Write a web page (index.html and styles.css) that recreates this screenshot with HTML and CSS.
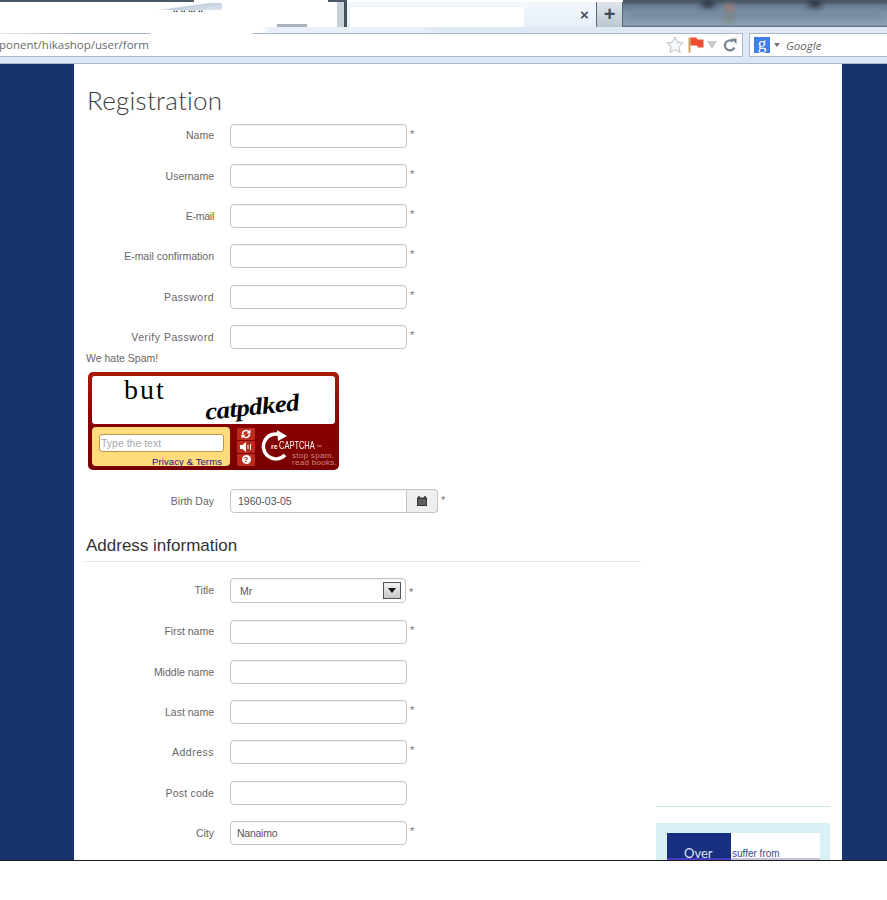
FILE: index.html
```html
<!DOCTYPE html>
<html lang="en">
<head>
<meta charset="utf-8">
<title>Registration</title>
<link rel="stylesheet" href="styles.css">
</head>
<body>
<header class="chrome">
  <div class="tabs">
    <div class="tabs-left">
      <span class="top-dark a"></span>
      <span class="top-dark b"></span>
      <span class="ghost-strip"></span>
      <span class="ghost-text">.. .. ... ..</span>
      <span class="ghost-bar"></span>
      <span class="tab-edge"></span>
    </div>
    <div class="tab">
      <span class="tab-white"></span>
      <span class="tab-close">×</span>
    </div>
    <div class="newtab">+</div>
    <div class="blurred">
      <span class="blur-dark one"></span>
      <span class="blur-dark two"></span>
      <span class="blur-color"></span>
      <span class="blur-light"></span>
    </div>
  </div>
  <div class="under-tabs"></div>
  <div class="toolbar">
    <div class="urlbar">
      <span class="url-text">ponent/hikashop/user/form</span>
      <span class="url-gap"></span>
      <svg class="ico-star" viewBox="0 0 18 18" width="18" height="18"><path d="M9 1l2.4 5.3 5.8.6-4.3 3.9 1.2 5.7L9 13.6l-5.1 2.9 1.2-5.7L.8 6.9l5.8-.6z" fill="#f6f7f8" stroke="#b9bfc4"/></svg>
      <svg class="ico-flag" viewBox="0 0 16 16" width="16" height="16"><path d="M1.500 0.500v15" stroke="#c9a05c" stroke-width="2"/><path d="M2.500 0.500h6l1 2h6v8h-5.500l-1-2h-6.500z" fill="#ee4d33"/></svg>
      <svg class="ico-drop" viewBox="0 0 10 8" width="10" height="8"><path d="M0 0h10L5 8z" fill="#c6cbd0"/></svg>
      <svg class="ico-reload" viewBox="0 0 14 14" width="14" height="14"><path d="M11.500 9.500A5 5 0 1 1 10 3.500" fill="none" stroke="#76838e" stroke-width="2.200"/><path d="M8 0.500h5.500V6z" fill="#76838e"/></svg>
    </div>
    <div class="searchbar">
      <span class="g-box">g</span>
      <svg class="ico-caret" viewBox="0 0 6 4" width="6" height="4"><path d="M0 0h6L3 4z" fill="#6d7378"/></svg>
      <span class="search-text">Google</span>
    </div>
  </div>
  <div class="strip"></div>
</header>

<div class="page">
  <div class="sheet">
    <main class="main">
      <h1 class="title">Registration</h1>
      <form class="form">
        <div class="row"><label class="label up">Name</label><span class="input"></span><span class="star">*</span></div>
        <div class="row"><label class="label">Username</label><span class="input"></span><span class="star">*</span></div>
        <div class="row"><label class="label narrow">E-mail</label><span class="input"></span><span class="star">*</span></div>
        <div class="row"><label class="label">E-mail confirmation</label><span class="input"></span><span class="star">*</span></div>
        <div class="row"><label class="label wide down">Password</label><span class="input"></span><span class="star">*</span></div>
        <div class="row tight"><label class="label wide down">Verify Password</label><span class="input"></span><span class="star">*</span></div>

        <p class="spam">We hate Spam!</p>
        <div class="captcha">
          <div class="cap-image">
            <span class="word-a">but</span>
            <span class="word-b">catpdked</span>
          </div>
          <div class="cap-bottom">
            <div class="cap-panel">
              <span class="cap-input">Type the text</span>
              <span class="cap-link">Privacy &amp; Terms</span>
            </div>
            <div class="cap-buttons">
              <span class="cap-btn"><svg viewBox="0 0 10 10" width="10" height="10"><path d="M8.500 5A3.500 3.500 0 0 1 2 6.800M1.500 5A3.500 3.500 0 0 1 8 3.200" fill="none" stroke="#fff" stroke-width="1.500"/><path d="M9.500 0.500v4h-4zM.5 9.500v-4h4z" fill="#fff"/></svg></span>
              <span class="cap-btn"><svg viewBox="0 0 12 10" width="12" height="10"><path d="M0 3h2.500L6 0v10L2.500 7H0z" fill="#fff"/><path d="M8 3v4M10.500 2v6" stroke="#fff"/></svg></span>
              <span class="cap-btn"><span class="cap-help">?</span></span>
            </div>
            <div class="cap-logo">
              <svg class="cap-arc" viewBox="0 0 30 32" width="30" height="32"><path d="M24 25A12.500 12.500 0 1 1 20 5" fill="none" stroke="#fff" stroke-width="3.500"/><path d="M16 0l10 6-9 5z" fill="#fff"/></svg>
              <div class="cap-brand"><span class="cap-re">re</span><span class="cap-name">CAPTCHA</span><span class="cap-tm">™</span></div>
              <div class="cap-tag">stop spam.<br>read books.</div>
            </div>
          </div>
        </div>

        <div class="row birth">
          <label class="label down">Birth Day</label>
          <div class="date-group">
            <span class="input date">1960-03-05</span>
            <span class="addon"><svg viewBox="0 0 10 10" width="10" height="10"><path d="M0 1.500h10V10H0z" fill="#333"/><path d="M2 0v2M8 0v2" stroke="#333" stroke-width="1.500"/><path d="M1 4h8M1 6h8M1 8h8" stroke="#ddd" stroke-width=".5"/></svg></span>
          </div>
          <span class="star">*</span>
        </div>

        <h2 class="section">Address information</h2>

        <div class="row title-row">
          <label class="label down">Title</label>
          <span class="input select">Mr<span class="select-btn"><svg viewBox="0 0 8 5" width="8" height="5"><path d="M0 0h8L4 5z" fill="#111"/></svg></span></span>
          <span class="star">*</span>
        </div>
        <div class="row"><label class="label">First name</label><span class="input"></span><span class="star">*</span></div>
        <div class="row"><label class="label">Middle name</label><span class="input"></span></div>
        <div class="row"><label class="label">Last name</label><span class="input"></span><span class="star">*</span></div>
        <div class="row"><label class="label wide">Address</label><span class="input"></span><span class="star">*</span></div>
        <div class="row"><label class="label semi down">Post code</label><span class="input"></span></div>
        <div class="row"><label class="label down">City</label><span class="input narrow">Nanaimo</span><span class="star">*</span></div>
      </form>
    </main>
    <aside class="side">
      <div class="side-rule"></div>
      <div class="promo">
        <div class="promo-inner">
          <div class="promo-navy">Over</div>
          <div class="promo-text">suffer from</div>
        </div>
      </div>
    </aside>
  </div>
</div>
<div class="bottom"></div>
</body>
</html>
```
FILE: styles.css
```css
* { box-sizing: border-box; }
html, body { margin: 0; padding: 0; height: 900px; overflow: hidden; background: #fff; }
body { font-family: "Liberation Sans", Arial, sans-serif; color: #555; }

/* browser chrome */
.chrome { height: 64px; display: flex; flex-direction: column; overflow: hidden; }
.tabs { height: 27px; display: flex; flex: none; }
.tabs-left { position: relative; width: 347px; background: #fff; flex: none; }
.top-dark { position: absolute; top: 0; height: 2px; background: #4a5868; }
.top-dark.a { left: 0; width: 194px; }
.top-dark.b { left: 328px; width: 19px; }
.ghost-strip { position: absolute; left: 120px; top: 3px; width: 102px; height: 7px; background: linear-gradient(172deg, #fff 55%, #c4d0de 62%, #dfe6ee 100%); }
.ghost-text { position: absolute; left: 173px; top: 5px; font-size: 9px; font-weight: bold; color: #222; line-height: 9px; }
.ghost-bar { position: absolute; left: 277px; top: 24px; width: 30px; height: 3px; background: #a9b3bd; }
.tab-edge { position: absolute; left: 337px; top: 2px; width: 10px; height: 25px; background: linear-gradient(90deg, #c9d1da 70%, #46505c 70%); }
.tab { position: relative; width: 249px; flex: none; background: linear-gradient(#f3f7fc, #e6eff9); border-top: 2px solid #fff; }
.tab-white { position: absolute; left: 3px; top: 5px; width: 174px; height: 20px; background: #fff; }
.tab-close { position: absolute; left: 233px; top: 4px; font-size: 15px; line-height: 18px; font-weight: bold; color: #4a525a; }
.newtab { width: 27px; flex: none; margin-top: 2px; background: linear-gradient(#dfe5ec, #bcc7d2); border-left: 1px solid #5a6774; border-right: 1px solid #5a6774; font-size: 20px; line-height: 24px; text-align: center; color: #3e4b58; font-weight: bold; }
.blurred { position: relative; flex: 1; overflow: hidden; background: linear-gradient(#4a5868 0, #4a5868 2px, #66798f 5px, #7d91a8 12px, #8a9eb5 25px, #566779 27px); }
.blur-dark { position: absolute; top: 0; width: 12px; height: 8px; background: #2a323a; filter: blur(3px); }
.blur-dark.one { left: 79px; }
.blur-dark.two { left: 186px; }
.blur-color { position: absolute; left: 102px; top: 4px; width: 9px; height: 18px; background: linear-gradient(#a8706e, #78957c); filter: blur(2.500px); }
.blur-light { position: absolute; left: 8px; top: 12px; width: 250px; height: 5px; background: #71859c; filter: blur(3px); }

.under-tabs { height: 6px; flex: none; background: linear-gradient(90deg, #fff 0, #fff 262px, #e9f0f9 270px, #e9f0f9 420px, #dfe9f5 440px); }

.toolbar { height: 24px; flex: none; display: flex; background: #dfe9f5; }
.urlbar {
  width: 743px; flex: none; display: flex; align-items: center; overflow: hidden; padding-right: 5px;
  background-color: #fff;
  background-image: linear-gradient(90deg, #e4e9ef 0, #a9b8c8 80px, #a9b8c8 150px, #fff 151px, #fff 252px, #a9b8c8 253px);
  background-size: 100% 1px; background-repeat: no-repeat; background-position: top;
  border-bottom: 1px solid #a9b8c8; border-right: 1px solid #a9b8c8;
}
.url-text { font-family: "Open Sans", sans-serif; font-size: 11.500px; color: #6a6a6a; margin-left: -1px; white-space: nowrap; }
.url-gap { flex: 1; }
.ico-star { margin-right: 4px; }
.ico-flag { margin-right: 3px; }
.ico-drop { margin-right: 6px; }
.searchbar { margin-left: 6px; flex: 1; display: flex; align-items: center; background: #fff; border-top: 1px solid #a9b8c8; border-bottom: 1px solid #a9b8c8; border-left: 1px solid #a9b8c8; padding-left: 4px; }
.g-box { width: 16px; height: 16px; background: #3f7fe8; color: #fff; font-family: "Liberation Serif", serif; font-size: 17px; line-height: 13px; text-align: center; }
.ico-caret { margin-left: 4px; }
.search-text { margin-left: 6px; font-family: "Open Sans", sans-serif; font-style: italic; font-size: 11.500px; color: #666; }
.strip { height: 7px; flex: none; background: #dbe7f6; border-bottom: 1px solid #a9b8c8; }

/* page */
.page {
  height: 796px; overflow: hidden; padding-left: 74px; padding-right: 45px;
  background-color: #17346f;
  background-image:
    radial-gradient(circle, #1f3e7b 1px, transparent 1.400px),
    radial-gradient(circle, #1c3a76 1px, transparent 1.400px);
  background-size: 16px 16px;
  background-position: 0 0, 8px 8px;
}
.sheet { height: 796px; background: #fff; display: flex; }
.main { width: 582px; flex: none; padding-left: 12px; }
.title { margin: 0 0 0 1px; height: 60px; padding-top: 21px; font-family: Lato, sans-serif; font-weight: 300; font-size: 26px; line-height: 30px; color: #3c3c3c; letter-spacing: .25px; }
.form { margin: 0; padding: 0; }

.row { display: flex; align-items: flex-start; height: 24px; margin-bottom: 16.150px; }
.row.tight { margin-bottom: 2.250px; }
.label { width: 128px; margin-right: 16px; padding-top: .5px; flex: none; text-align: right; font-size: 10.500px; line-height: 22px; color: #666; }
.label.up { padding-top: 0; }
.label.down { padding-top: 1.500px; }
.wide { letter-spacing: .5px; }
.semi { letter-spacing: .2px; }
.narrow { letter-spacing: -.25px; }
.input { display: block; width: 177px; height: 24px; flex: none; background: #fff; border: 1px solid #c4c4c4; border-radius: 4px; box-shadow: inset 0 1px 1px rgba(0,0,0,.05); padding-left: 6px; font-size: 10.500px; line-height: 23px; color: #555; }
.star { margin-left: 3px; font-size: 11px; line-height: 20px; color: #777; }
.birth .star { line-height: 22px; }
.title-row .star { line-height: 28px; }

.spam { margin: 0; height: 21px; font-size: 10.500px; line-height: 14px; color: #666; }

.captcha { width: 251px; height: 98px; margin-left: 2px; margin-bottom: 19px; padding: 4px; background: linear-gradient(#a81a08, #8c0000 50%, #780000); border-radius: 5px; display: flex; flex-direction: column; }
.cap-image { height: 48px; flex: none; background: #fff; border-radius: 3px; display: flex; align-items: flex-start; color: #000; }
.word-a { font-family: "Liberation Serif", serif; font-size: 28px; line-height: 32px; margin-top: -2px; margin-left: 32px; letter-spacing: 2px; }
.word-b { font-family: "Liberation Serif", serif; font-weight: bold; font-style: italic; font-size: 24px; line-height: 30px; margin-left: 44px; margin-top: 16px; letter-spacing: -.5px; transform: rotate(-6deg) scaleX(1.120); }
.cap-bottom { display: flex; margin-top: 3px; height: 39px; }
.cap-panel { width: 138px; flex: none; background: #ffdb7c; border-radius: 4px; padding: 7px 6px 0 7px; display: flex; flex-direction: column; }
.cap-input { display: block; height: 18px; background: #fff; border: 1px solid #b8964b; border-radius: 3px; padding-left: 1px; font-size: 10.500px; line-height: 16px; color: #a8a8a8; }
.cap-link { margin-top: 5px; margin-right: 2px; text-align: right; font-size: 9.500px; line-height: 10px; letter-spacing: .1px; color: #1a0a90; }
.cap-buttons { width: 18px; margin-left: 7px; margin-top: 1px; flex: none; display: flex; flex-direction: column; gap: 1px; }
.cap-btn { height: 12px; flex: none; background: #bc2c1e; display: flex; align-items: center; justify-content: center; border-radius: 1px; }
.cap-help { width: 9px; height: 9px; border-radius: 50%; background: #fff; color: #b02214; font-size: 8px; line-height: 9px; font-weight: bold; text-align: center; }
.cap-logo { position: relative; flex: 1; margin-left: 6px; }
.cap-arc { position: absolute; left: 0; top: 3px; }
.cap-brand { position: absolute; left: 10px; top: 13px; display: flex; align-items: baseline; color: #fff; white-space: nowrap; }
.cap-re { font-size: 7px; font-weight: bold; line-height: 10px; }
.cap-name { width: 37px; margin-left: 1px; font-size: 11px; line-height: 10px; transform-origin: left; transform: scaleX(.68); }
.cap-tm { font-size: 6px; line-height: 10px; color: #d99; }
.cap-tag { position: absolute; left: 31px; top: 25px; font-size: 8px; line-height: 7px; color: #d08a80; letter-spacing: .3px; white-space: nowrap; }

.row.birth { margin-bottom: 0; }
.date-group { display: flex; flex: none; }
.input.date { border-radius: 4px 0 0 4px; padding-left: 7px; }
.addon { width: 31px; height: 24px; flex: none; background: #eee; border: 1px solid #c4c4c4; border-left: 0; border-radius: 0 4px 4px 0; display: flex; align-items: center; justify-content: center; }
.section { box-sizing: content-box; margin: 24px 0 16px -1px; height: 24px; width: 555px; padding-left: 1px; border-bottom: 1px solid #e4e4e4; font-weight: normal; font-size: 17px; line-height: 17px; color: #333; }

.row.title-row { height: 25px; margin-bottom: 17px; }
.input.select { position: relative; width: 176px; height: 25px; padding-left: 9px; line-height: 25px; }
.select-btn { position: absolute; right: 4px; top: 3px; width: 18px; height: 17px; background: linear-gradient(#f2f2f2, #c8c8c8); border: 1px solid #555; display: flex; align-items: center; justify-content: center; }

/* sidebar */
.side { width: 174px; flex: none; padding-top: 742px; }
.side-rule { height: 1px; background: #cfe6ec; }
.promo { margin-top: 16px; height: 60px; background: #d9f1f6; padding: 10px 10px 0 11px; }
.promo-inner { display: flex; height: 27px; background: #fff; border-bottom: 2px solid #c4c4dc; }
.promo-navy { width: 64px; flex: none; margin-bottom: -2px; background: #172f7e; border-bottom: 2px solid #4a3cc0; color: #dfe3f2; font-family: Lato, sans-serif; font-size: 13px; line-height: 12px; padding: 14px 0 0 17px; }
.promo-text { margin-left: 1px; padding-top: 15px; font-size: 10px; line-height: 12px; color: #3b4a86; }

.bottom { height: 40px; border-top: 1px solid #1a1a1a; background: #fff; }
```
